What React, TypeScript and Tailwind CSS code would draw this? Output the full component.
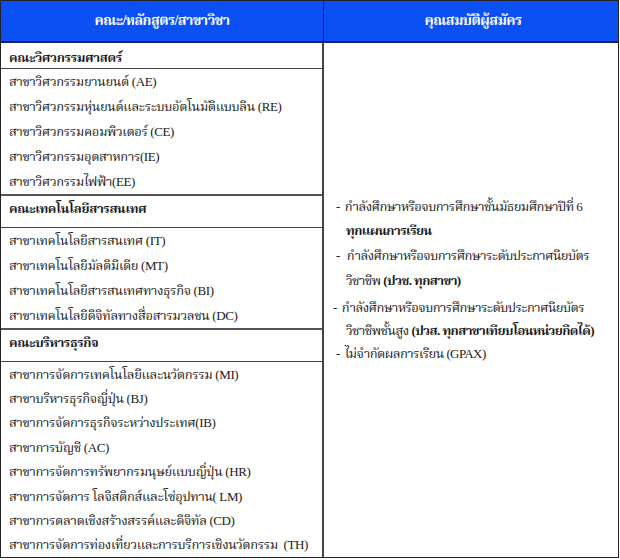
const FACULTIES = [
  {
    name: "คณะวิศวกรรมศาสตร์",
    first: true,
    item: "h-[25px]",
    majors: [
      "สาขาวิศวกรรมยานยนต์ (AE)",
      "สาขาวิศวกรรมหุ่นยนต์และระบบอัตโนมัติแบบลีน (RE)",
      "สาขาวิศวกรรมคอมพิวเตอร์ (CE)",
      "สาขาวิศวกรรมอุตสาหการ(IE)",
      "สาขาวิศวกรรมไฟฟ้า(EE)",
    ],
  },
  {
    name: "คณะเทคโนโลยีสารสนเทศ",
    first: false,
    item: "h-[25px]",
    majors: [
      "สาขาเทคโนโลยีสารสนเทศ (IT)",
      "สาขาเทคโนโลยีมัลติมีเดีย (MT)",
      "สาขาเทคโนโลยีสารสนเทศทางธุรกิจ (BI)",
      "สาขาเทคโนโลยีดิจิทัลทางสื่อสารมวลชน (DC)",
    ],
  },
  {
    name: "คณะบริหารธุรกิจ",
    first: false,
    item: "h-[24.4px]",
    majors: [
      "สาขาการจัดการเทคโนโลยีและนวัตกรรม (MI)",
      "สาขาบริหารธุรกิจญี่ปุ่น (BJ)",
      "สาขาการจัดการธุรกิจระหว่างประเทศ(IB)",
      "สาขาการบัญชี (AC)",
      "สาขาการจัดการทรัพยากรมนุษย์แบบญี่ปุ่น (HR)",
      "สาขาการจัดการ โลจิสติกส์และโซ่อุปทาน( LM)",
      "สาขาการตลาดเชิงสร้างสรรค์และดิจิทัล (CD)",
      "สาขาการจัดการท่องเที่ยวและการบริการเชิงนวัตกรรม  (TH)",
    ],
  },
];

export default function App() {
  return (
    <div
      className="w-[620px] h-[560px] bg-white text-[#1a1a1a] text-[13px] leading-none tracking-[-0.4px]"
      style={{ fontFamily: '"Liberation Serif", "Noto Serif Thai", "Noto Sans Thai", serif' }}
    >
      <div className="w-[619px] h-[558px] border border-[#222] flex flex-col overflow-hidden">
        {/* header */}
        <div className="shrink-0 flex h-[42px] bg-[#0b50f2] border-b-2 border-[#0a1f6e] text-white font-bold text-[14px] tracking-[-0.5px]">
          <div className="w-[323px] flex items-center justify-center border-r border-[#0a1f6e]">
            คณะ/หลักสูตร/สาขาวิชา
          </div>
          <div className="flex-1 flex items-center justify-center pl-[4px]">คุณสมบัติผู้สมัคร</div>
        </div>

        <div className="flex flex-1 min-h-0">
          {/* left column */}
          <div className="w-[323px] shrink-0 flex flex-col border-r-2 border-[#444]">
            {FACULTIES.map(f => (
              <div key={f.name}>
                <div
                  className={`font-bold pl-[8px] border-b border-[#444] ${
                    f.first ? "h-[26px] pt-[8px]" : "h-[34px] pt-[6px] border-t-2 border-t-[#555]"
                  }`}
                >
                  {f.name}
                </div>
                {f.majors.map(m => (
                  <div key={m} className={`${f.item} pl-[8px] flex items-center whitespace-pre`}>
                    {m}
                  </div>
                ))}
              </div>
            ))}
          </div>

          {/* right column */}
          <div className="flex-1 pt-[157px] pl-[12px] whitespace-nowrap tracking-[-0.6px]">
            <div className="flex flex-col">
              <div>
                <div className="flex gap-[5px]"><span>-</span><span>กำลังศึกษาหรือจบการศึกษาชั้นมัธยมศึกษาปีที่ 6</span></div>
                <div className="pl-[10px] pt-[11px] font-bold">ทุกแผนการเรียน</div>
              </div>
              <div className="mt-[12px]">
                <div className="flex gap-[7px]"><span>-</span><span>กำลังศึกษาหรือจบการศึกษาระดับประกาศนียบัตร</span></div>
                <div className="pl-[10px] pt-[12px]">วิชาชีพ <span className="font-bold">(ปวช. ทุกสาขา)</span></div>
              </div>
              <div className="-ml-[3px] mt-[14px]">
                <div className="flex gap-[5px]"><span>-</span><span>กำลังศึกษาหรือจบการศึกษาระดับประกาศนียบัตร</span></div>
                <div className="pl-[13px] pt-[10px]">วิชาชีพชั้นสูง <span className="font-bold">(ปวส. ทุกสาขาเทียบโอนหน่วยกิตได้)</span></div>
              </div>
              <div className="flex gap-[5px] mt-[10px]"><span>-</span><span>ไม่จำกัดผลการเรียน (GPAX)</span></div>
            </div>
          </div>
        </div>
      </div>
    </div>
  );
}
